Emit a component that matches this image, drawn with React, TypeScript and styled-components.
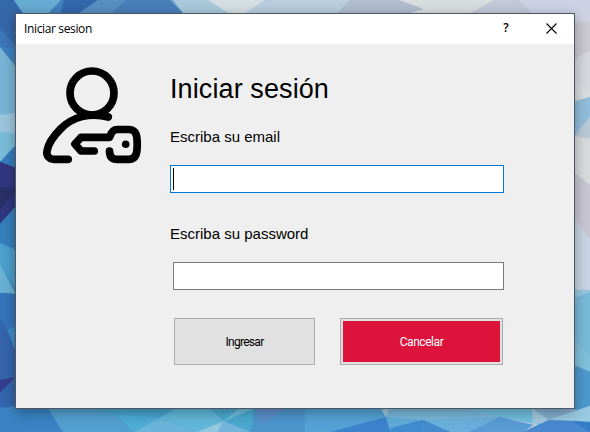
import React from "react";
import styled, { createGlobalStyle } from "styled-components";

const GlobalStyle = createGlobalStyle`
  * { box-sizing: border-box; }
  body { margin: 0; overflow: hidden; font-family: "Liberation Sans", Arial, sans-serif; color: #000; }
`;

const Desktop = styled.main`
  position: relative;
  width: 590px;
  height: 432px;
  padding: 13px 15px;
  overflow: hidden;
  background: linear-gradient(90deg, #3c7fc0 0 50%, #c6d2e0 50%);
`;

const Wallpaper = styled.svg`
  position: absolute;
  inset: 0;
`;

const Dialog = styled.section`
  position: relative;
  width: 560px;
  height: 396px;
  border: 1px solid #4c5761;
  background: #efefef;
  box-shadow: 0 3px 12px rgba(0, 0, 0, 0.32);
`;

const TitleBar = styled.header`
  display: flex;
  align-items: center;
  height: 30px;
  padding-left: 8px;
  background: #fff;
`;

const WindowTitle = styled.span`
  flex: 1;
  font: 12px/30px "Open Sans", "Noto Sans", sans-serif;
  letter-spacing: -0.36px;
`;

const TitleButton = styled.button`
  display: flex;
  align-items: center;
  justify-content: center;
  width: 45px;
  height: 30px;
  padding: 0 1px 2px 0;
  border: 0;
  background: transparent;
  font: 600 12px/28px "Open Sans", sans-serif;
  color: #000;
`;

const Content = styled.div`
  display: flex;
  padding: 22px 0 0 26px;
`;

const UserKey = styled.svg`
  flex: none;
  width: 100px;
  height: 100px;
  fill: none;
  stroke: #000;
  stroke-width: 7.7;
  stroke-linecap: round;
  stroke-linejoin: round;
`;

const Form = styled.form`
  display: flex;
  flex-direction: column;
  width: 334px;
  margin-left: 28px;
`;

const Heading = styled.h1`
  margin: 6px 0 0;
  font-size: 27px;
  font-weight: 400;
  line-height: 34px;
  letter-spacing: 0.1px;
`;

const Label = styled.label<{ $gap: number }>`
  margin-top: ${(p) => p.$gap}px;
  font-size: 15px;
  line-height: 20px;
`;

const Field = styled.input<{ $active?: boolean }>`
  height: 28px;
  margin: ${(p) => (p.$active ? "18px 0 0" : "18px 0 0 3px")};
  padding: 0 2px;
  border: 1px solid ${(p) => (p.$active ? "#0078d7" : "#7a7a7a")};
  border-radius: 0;
  outline: none;
  background: ${(p) =>
    p.$active ? "linear-gradient(#000, #000) 2px 2px / 1px 22px no-repeat #fff" : "#fff"};
`;

const Actions = styled.div`
  display: flex;
  gap: 25px;
  margin: 28px 0 0 4px;
`;

const ActionButton = styled.button<{ $danger?: boolean }>`
  width: ${(p) => (p.$danger ? 163 : 141)}px;
  height: 47px;
  padding: 2px;
  border: 1px solid #adadad;
  border-radius: 0;
  background: ${(p) => (p.$danger ? "#dc143c" : "#e1e1e1")};
  box-shadow: ${(p) => (p.$danger ? "inset 0 0 0 2px #e1e1e1" : "none")};
  color: ${(p) => (p.$danger ? "#fff" : "#000")};
  font: 12px/14px Roboto, sans-serif;
  letter-spacing: ${(p) => (p.$danger ? "-0.45px" : "-0.7px")};
`;

const facets: [string, string][] = [
  ["0,0 14,0 22,14 16,45 0,40", "#3568ab"],
  ["14,0 64,0 61,14 24,14", "#67acd3"],
  ["0,28 16,46 0,48", "#3c76b9"],
  ["0,47 16,67 16,115 0,115", "#78b4d5"],
  ["0,115 16,113 16,145 0,162", "#9bc5dd"],
  ["0,132 16,134 16,145 0,162", "#79bcd8"],
  ["0,162 16,145 16,168 4,162", "#367bbb"],
  ["0,162 16,168 16,212 0,224", "#30377f"],
  ["0,187 16,190 0,209", "#293067"],
  ["0,224 16,206 16,252 0,244", "#347fbc"],
  ["0,243 16,250 16,290 0,264", "#4ba0cd"],
  ["0,264 16,294 0,293", "#68b2d5"],
  ["0,293 16,294 16,326 7,330", "#3475bb"],
  ["0,293 7,330 0,319", "#3475bb"],
  ["7,330 16,326 16,353", "#3f8cc8"],
  ["0,319 7,330 16,353 16,376 0,380", "#3565ad"],
  ["0,380 16,377 0,393", "#343f90"],
  ["0,393 16,377 16,409 0,409", "#3466ad"],
  ["48,14 61,0 66,0 61,14", "#4181bc"],
  ["64,0 98,0 78,14 61,14", "#3467ac"],
  ["98,0 170,0 185,14 78,14", "#487fb9"],
  ["98,0 126,0 110,14 78,14", "#578fc1"],
  ["170,0 225,0 238,14 184,14", "#68a5cd"],
  ["173,0 208,0 230,14 184,14", "#a9c9db"],
  ["208,0 270,0 246,14 230,14", "#d5dfe3"],
  ["265,0 350,0 340,14 244,14", "#b8cedf"],
  ["350,0 400,0 424,9 408,14 337,14", "#afbdce"],
  ["400,0 424,0 424,9", "#d9dddd"],
  ["424,0 494,0 470,14 408,14 424,9", "#d8dddf"],
  ["494,0 519,0 533,14 470,14", "#c3c9d9"],
  ["519,0 590,0 590,23 573,23 533,14", "#cdd2e5"],
  ["573,22 590,22 590,50 573,62", "#cbc9d0"],
  ["573,60 590,51 590,98 573,101", "#d6d7dd"],
  ["573,77 590,92 590,98 573,101", "#dadbde"],
  ["573,102 590,97 590,117 574,136", "#91bdda"],
  ["574,136 590,117 590,139", "#b9c9d7"],
  ["573,136 590,139 590,209 573,180", "#d9dadd"],
  ["573,172 590,185 590,240 573,218", "#c6c5d1"],
  ["573,218 590,239 590,292 573,290", "#c7d3e2"],
  ["573,290 590,290 590,308 573,299", "#97c6df"],
  ["573,299 590,292 590,356 573,365", "#78b9d8"],
  ["573,340 590,356 590,372 573,365", "#81c0dc"],
  ["573,365 590,372 590,409 573,412", "#4d98cd"],
  ["0,408 16,406 48,408 63,432 0,432", "#3983c4"],
  ["48,408 115,408 116,415 135,432 63,432", "#519fd0"],
  ["94,408 115,408 115,415", "#44a4cf"],
  ["115,408 176,408 160,418 115,414", "#4aa2d0"],
  ["115,414 160,418 134,432", "#4eabd4"],
  ["160,418 197,432 134,432", "#69b4d8"],
  ["160,418 176,408 210,408 224,421 197,432", "#60b5d8"],
  ["197,432 224,421 218,432", "#91c8df"],
  ["210,408 255,408 252,432 224,421", "#4aa8d0"],
  ["224,421 240,408 255,408", "#70bddb"],
  ["224,421 251,432 218,432", "#72b4db"],
  ["255,408 305,408 305,432 251,432", "#4c94cc"],
  ["255,408 286,408 261,424", "#5c8ecb"],
  ["305,408 381,408 386,417 331,432 305,432", "#53a2d4"],
  ["381,408 390,408 386,417", "#9acbdd"],
  ["390,408 465,408 500,417 423,420 386,417", "#78b7d9"],
  ["331,432 386,417 391,432", "#3b83cd"],
  ["386,417 423,420 391,432", "#61abd8"],
  ["391,428 423,420 424,432 391,432", "#3f8bd0"],
  ["423,420 500,417 469,432 433,432", "#6aafdc"],
  ["423,420 450,432 424,432", "#438ccb"],
  ["465,408 532,408 541,425 500,417", "#70bddd"],
  ["500,417 533,425 523,432 469,432", "#579bd5"],
  ["532,408 549,420 533,425", "#a0c7e0"],
  ["532,408 575,408 575,415 549,420", "#83aece"],
  ["575,411 590,406 590,423 549,420", "#98cae2"],
  ["549,420 590,422 590,432 523,432", "#4788cf"],
  ["573,421 590,423 590,432", "#347cc7"],
];

export default function App() {
  return (
    <>
      <GlobalStyle />
      <Desktop>
        <Wallpaper width="590" height="432" viewBox="0 0 590 432" aria-hidden="true">
          {facets.map(([points, fill]) => (
            <polygon key={points} points={points} fill={fill} stroke={fill} strokeWidth="0.4" />
          ))}
        </Wallpaper>
        <Dialog role="dialog" aria-label="Iniciar sesion">
          <TitleBar>
            <WindowTitle>Iniciar sesion</WindowTitle>
            <TitleButton type="button">?</TitleButton>
            <TitleButton type="button" aria-label="Cerrar">
              <svg width="11" height="11" viewBox="0 0 11 11" fill="none" stroke="#000" strokeWidth="1.1">
                <path d="M.5.5l10 10M10.5.5l-10 10" />
              </svg>
            </TitleButton>
          </TitleBar>
          <Content>
            <UserKey viewBox="42 66 100 100" aria-hidden="true">
              <circle cx="92" cy="93" r="22" />
              <path d="M108.300 117C90 112 72 117 60.500 129C52.500 137 48 145 47 151C46 156 49.500 159.300 54 159.300H68.200" />
              <path d="M94.200 151H81L74.900 144L81 137.400H109.300C110.500 137.400 110.500 129.500 117 129.500H129C137.200 129.500 137.200 138 137.200 144.300C137.200 150.500 137.200 159.300 129 159.300H117C112 159.300 109.700 156.500 109.500 151" />
              <circle cx="125.7" cy="144.2" r="3.8" fill="#000" stroke="none" />
            </UserKey>
            <Form>
              <Heading>Iniciar sesión</Heading>
              <Label htmlFor="email" $gap={21}>Escriba su email</Label>
              <Field id="email" $active />
              <Label htmlFor="password" $gap={31}>Escriba su password</Label>
              <Field id="password" type="password" />
              <Actions>
                <ActionButton type="button">Ingresar</ActionButton>
                <ActionButton type="button" $danger>Cancelar</ActionButton>
              </Actions>
            </Form>
          </Content>
        </Dialog>
      </Desktop>
    </>
  );
}
